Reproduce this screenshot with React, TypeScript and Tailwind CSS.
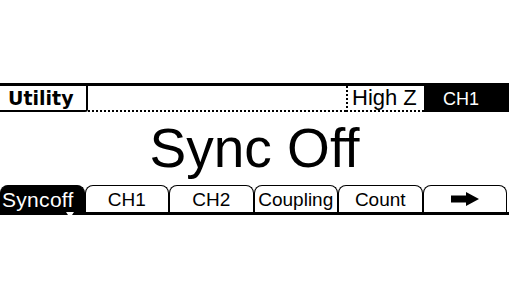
const TABS = ['Syncoff', 'CH1', 'CH2', 'Coupling', 'Count', 'next'];

function RightArrow() {
  return (
    <svg width="28" height="14" viewBox="0 0 28 14">
      <polygon points="0,3.5 15,3.5 15,0 28,7 15,14 15,10.5 0,10.5" fill="#000" />
    </svg>
  );
}

function Tab({ label, active }: { label: string; active?: boolean }) {
  return (
    <div
      className={
        'relative flex h-[27px] items-center justify-center rounded-t-[8px] border-x-[1.5px] border-t-[1.5px] border-black ' +
        (active ? 'bg-black text-white justify-start pl-[1px]' : 'bg-white text-black')
      }
    >
      {label === 'next' ? (
        <RightArrow />
      ) : (
        <span className={active ? 'relative text-[21px] leading-none tracking-[0.3px]' : 'text-[19px] leading-none'}>
          {label}
          {active && (
            <svg className="absolute -bottom-[8px] right-[0px]" width="8" height="8" viewBox="0 0 8 8">
              <polygon points="0,2 8,2 4,8" fill="#fff" />
            </svg>
          )}
        </span>
      )}
    </div>
  );
}

export default function App() {
  return (
    <div className="h-[298px] w-[509px] bg-white pt-[83px] font-['Liberation_Sans',Arial,sans-serif] text-black">
      <div className="border-t-[3px] border-black">
        {/* title bar */}
        <div className="flex h-[26px]">
          <div className="flex w-[88px] items-center rounded-br-[3px] border-b-2 border-r-2 border-black pl-[8px] font-['DejaVu_Sans',sans-serif] text-[19px] font-bold leading-none">
            Utility
          </div>
          <div className="flex-1 border-b-2 border-dotted border-black" />
          <div className="flex w-[78px] items-center border-b-2 border-l-2 border-dotted border-black pl-[4px] text-[22px] leading-none">
            High Z
          </div>
          <div className="flex w-[85px] items-center bg-black pl-[19px] text-[18px] leading-none text-white">
            CH1
          </div>
        </div>

        {/* main message */}
        <div className="flex h-[73px] items-center justify-center">
          <span className="text-[55px] leading-none">Sync Off</span>
        </div>

        {/* soft keys */}
        <div className="grid grid-cols-6 pr-[2px]">
          {TABS.map((t, i) => (
            <Tab key={t} label={t} active={i === 0} />
          ))}
        </div>
        <div className="h-[3px] bg-black" />
      </div>
    </div>
  );
}
